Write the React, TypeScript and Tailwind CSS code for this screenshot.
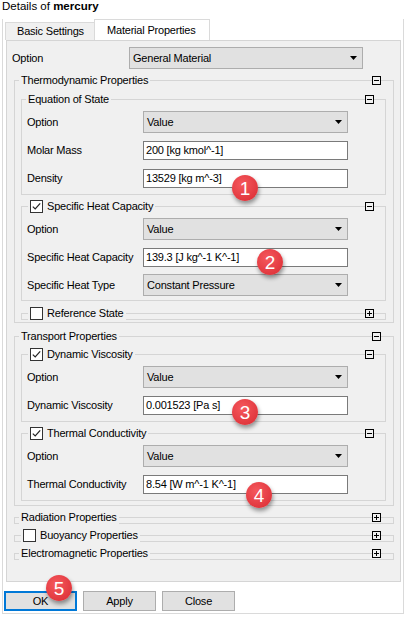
import React from "react";

function BoxIcon({ plus }: { plus?: boolean }) {
  return (
    <svg width="9" height="9" viewBox="0 0 9 9" className="shrink-0">
      <rect x="0.5" y="0.5" width="8" height="8" fill="#f0f0f0" stroke="#000" />
      <path d="M2 4.5h5" stroke="#000" />
      {plus && <path d="M4.5 2v5" stroke="#000" />}
    </svg>
  );
}

function Check({ checked }: { checked?: boolean }) {
  return (
    <span className="w-[13px] h-[13px] border border-[#333] bg-white flex items-center justify-center shrink-0">
      {checked && (
        <svg width="11" height="11" viewBox="0 0 11 11">
          <path d="M1.8 5.6l2.4 2.4 5-5.6" fill="none" stroke="#222" strokeWidth="1.2" />
        </svg>
      )}
    </span>
  );
}

function Group({
  title,
  check,
  collapsed,
  inner,
  className = "",
  bodyClass = "",
  children,
}: {
  title: string;
  check?: boolean;
  collapsed?: boolean;
  inner?: boolean;
  className?: string;
  bodyClass?: string;
  children?: React.ReactNode;
}) {
  const hasCheck = check !== undefined;
  return (
    <div className={`border border-[#d5d5d5] ${className}`}>
      <div
        className={`flex items-center justify-between h-[13px] -mt-[7px] ${
          collapsed ? "-mb-[1px]" : ""
        }`}
      >
        <span
          className={`${hasCheck ? "ml-[6px]" : "ml-[4px]"} px-[2px] bg-[#f0f0f0] flex items-center gap-[4px] leading-[13px]`}
        >
          {hasCheck && <Check checked={check} />}
          {title}
        </span>
        <span className={`bg-[#f0f0f0] ${inner ? "mr-[11px]" : "mr-[12px]"}`}>
          <BoxIcon plus={collapsed} />
        </span>
      </div>
      {!collapsed && <div className={bodyClass}>{children}</div>}
    </div>
  );
}

function Select({ value, w }: { value: string; w: string }) {
  return (
    <div
      className={`${w} h-[22px] border border-[#adadad] bg-[#e1e1e1] flex items-center justify-between pl-[3px] pr-[5px] shrink-0`}
    >
      <span>{value}</span>
      <svg width="7" height="4" viewBox="0 0 7 4">
        <path d="M0 0h7L3.5 4z" fill="#000" />
      </svg>
    </div>
  );
}

function Input({ value }: { value: string }) {
  return (
    <div className="w-[205px] h-[19px] border border-[#7a7a7a] bg-white pl-[2px] flex items-center shrink-0">
      {value}
    </div>
  );
}

function Row({ label, children }: { label: string; children: React.ReactNode }) {
  return (
    <div className="flex items-center h-[28px] pl-[5px]">
      <span className="w-[116px] shrink-0">{label}</span>
      {children}
    </div>
  );
}

function Badge({ n, pos }: { n: number; pos: string }) {
  return (
    <div
      className={`absolute ${pos} w-[26px] h-[26px] rounded-full bg-[radial-gradient(circle_at_40%_35%,#f5585d,#d92a31)] shadow-[1px_3px_4px_rgba(0,0,0,0.4)] text-white text-[19px] leading-none flex items-center justify-center tracking-normal`}
    >
      {n}
    </div>
  );
}

export default function App() {
  return (
    <div className="relative w-[407px] h-[618px] bg-white text-black text-[11px] tracking-[-0.2px] font-['Liberation_Sans',Arial,sans-serif] overflow-hidden">
      <div className="h-[19px] pl-[2px] leading-[13px] text-[11.5px] tracking-normal">
        Details of <span className="font-bold">mercury</span>
      </div>

      <div className="ml-[2px] w-[402px] h-[595px] border-x border-b border-[#dadada]">
        {/* tabs */}
        <div className="flex items-end h-[21px]">
          <div className="ml-[2px] w-[89px] h-[18px] border-l border-t border-[#dadada] bg-[#f0f0f0] flex items-center pl-[11px]">
            Basic Settings
          </div>
          <div className="w-[116px] h-[21px] border-x border-t border-[#dadada] bg-white flex items-center pl-[12px]">
            Material Properties
          </div>
        </div>

        {/* panel */}
        <div className="ml-[3px] w-[395px] h-[542px] border border-[#d5d5d5] bg-[#f0f0f0]">
          <div className="flex items-center h-[22px] mt-[6px]">
            <span className="w-[122px] pl-[5px] shrink-0">Option</span>
            <Select value="General Material" w="w-[234px]" />
          </div>

          <Group title="Thermodynamic Properties" className="mt-[11px] ml-[7px] mr-[6px]" bodyClass="pb-[2px]">
            <Group title="Equation of State" inner className="mt-[12px] ml-[6px] mr-[7px]" bodyClass="mt-[2px] pb-[2px]">
              <Row label="Option">
                <Select value="Value" w="w-[205px]" />
              </Row>
              <Row label="Molar Mass">
                <Input value="200 [kg kmol^-1]" />
              </Row>
              <Row label="Density">
                <Input value="13529 [kg m^-3]" />
              </Row>
            </Group>

            <Group title="Specific Heat Capacity" check inner className="mt-[11px] ml-[6px] mr-[7px]" bodyClass="mt-[2px] pb-[1px]">
              <Row label="Option">
                <Select value="Value" w="w-[205px]" />
              </Row>
              <Row label="Specific Heat Capacity">
                <Input value="139.3 [J kg^-1 K^-1]" />
              </Row>
              <Row label="Specific Heat Type">
                <Select value="Constant Pressure" w="w-[205px]" />
              </Row>
            </Group>

            <Group title="Reference State" check={false} collapsed inner className="mt-[12px] ml-[6px] mr-[7px]" />
          </Group>

          <Group title="Transport Properties" className="mt-[13px] ml-[7px] mr-[6px]" bodyClass="pb-[4px]">
            <Group title="Dynamic Viscosity" check inner className="mt-[11px] ml-[6px] mr-[7px]" bodyClass="mt-[2px] pb-[2px]">
              <Row label="Option">
                <Select value="Value" w="w-[205px]" />
              </Row>
              <Row label="Dynamic Viscosity">
                <Input value="0.001523 [Pa s]" />
              </Row>
            </Group>

            <Group title="Thermal Conductivity" check inner className="mt-[11px] ml-[6px] mr-[7px]" bodyClass="mt-[2px] pb-[2px]">
              <Row label="Option">
                <Select value="Value" w="w-[205px]" />
              </Row>
              <Row label="Thermal Conductivity">
                <Input value="8.54 [W m^-1 K^-1]" />
              </Row>
            </Group>
          </Group>

          <Group title="Radiation Properties" collapsed className="mt-[11px] ml-[7px] mr-[6px]" />
          <Group title="Buoyancy Properties" check={false} collapsed className="mt-[11px] ml-[7px] mr-[6px]" />
          <Group title="Electromagnetic Properties" collapsed className="mt-[11px] ml-[7px] mr-[6px]" />
        </div>

        {/* buttons */}
        <div className="flex gap-[6px] mt-[9px] ml-[1px]">
          <button className="w-[73px] h-[20px] border-2 border-[#0078d7] bg-[#e1e1e1] flex items-center justify-center">
            OK
          </button>
          <button className="w-[73px] h-[20px] border border-[#adadad] bg-[#e1e1e1] flex items-center justify-center">
            Apply
          </button>
          <button className="w-[73px] h-[20px] border border-[#adadad] bg-[#e1e1e1] flex items-center justify-center">
            Close
          </button>
        </div>
      </div>

      <Badge n={1} pos="left-[232px] top-[175px]" />
      <Badge n={2} pos="left-[257px] top-[249px]" />
      <Badge n={3} pos="left-[232px] top-[399px]" />
      <Badge n={4} pos="left-[246px] top-[482px]" />
      <Badge n={5} pos="left-[46px] top-[575px]" />
    </div>
  );
}
